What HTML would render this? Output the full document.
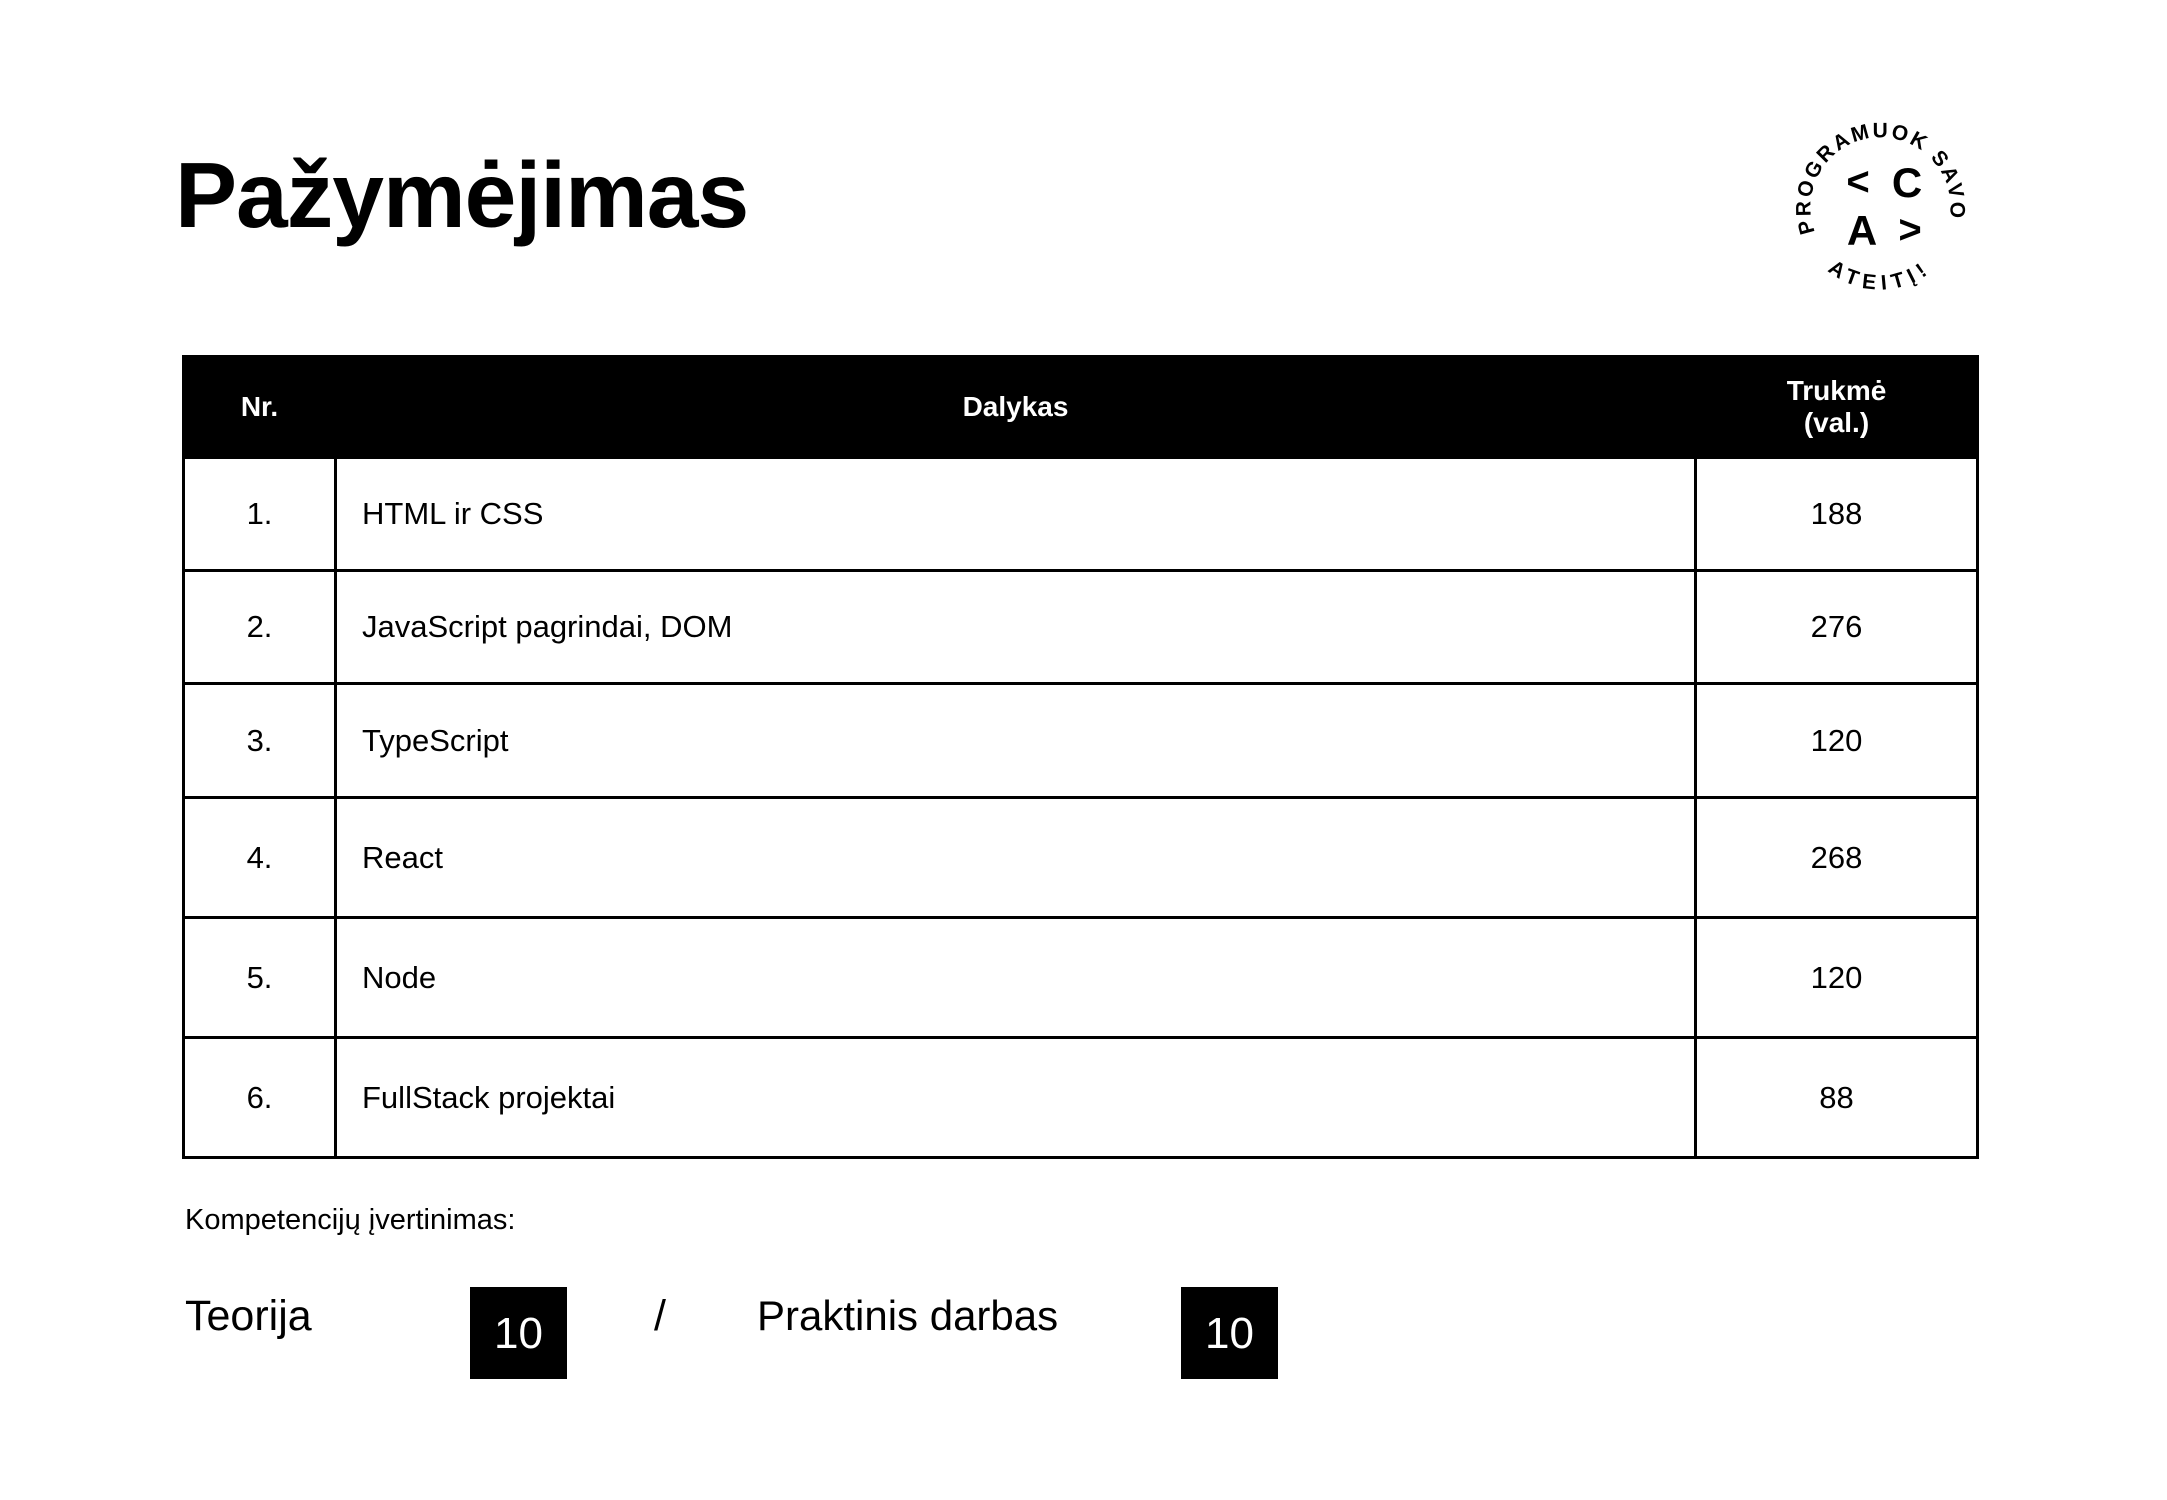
<!DOCTYPE html>
<html><head><meta charset="utf-8"><style>
html,body{margin:0;padding:0;background:#fff;}
body{width:2167px;height:1500px;position:relative;overflow:hidden;font-family:"Liberation Sans",sans-serif;color:#000;}
.a{position:absolute;white-space:nowrap;}
.title{left:175px;top:149px;font-size:93px;font-weight:bold;letter-spacing:-1px;line-height:1;}
table{position:absolute;left:182px;top:355px;width:1797px;border-collapse:collapse;}
td,th{border:3px solid #000;padding:0;}
th{background:#000;color:#fff;font-size:28px;font-weight:bold;height:98px;line-height:32px;}
td{font-size:31px;}
td.c{text-align:center;}
td.l{padding-left:25px;}
.box{position:absolute;background:#000;color:#fff;font-size:44px;text-align:center;line-height:94px;width:97px;height:92px;top:1287px;}
</style></head><body>
<div class="a title">Pažymėjimas</div>

<svg class="a" style="left:0;top:0" width="2167" height="320" viewBox="0 0 2167 320">
<defs>
<path id="p1" d="M 1815 232 A 70 70 0 1 1 1948 226"/>
<path id="p2" d="M 1817 260 A 82 82 0 0 0 1943 260"/>
</defs>
<text font-family="Liberation Sans" font-size="21" font-weight="bold"><textPath href="#p1" textLength="255" lengthAdjust="spacing">PROGRAMUOK SAVO</textPath></text>
<text font-family="Liberation Sans" font-size="21" font-weight="bold" letter-spacing="6"><textPath href="#p2" startOffset="50%" text-anchor="middle">ATEITĮ!</textPath></text>
<text x="1858" y="195" font-family="Liberation Sans" font-size="40" font-weight="bold" text-anchor="middle">&lt;</text>
<text x="1907" y="197" font-family="Liberation Sans" font-size="42" font-weight="bold" text-anchor="middle">C</text>
<text x="1862" y="245" font-family="Liberation Sans" font-size="42" font-weight="bold" text-anchor="middle">A</text>
<text x="1910" y="243" font-family="Liberation Sans" font-size="40" font-weight="bold" text-anchor="middle">&gt;</text>
</svg>

<table>
<colgroup><col style="width:152px"><col style="width:1360px"><col></colgroup>
<tr><th>Nr.</th><th>Dalykas</th><th>Trukmė<br>(val.)</th></tr>
<tr style="height:113px"><td class="c">1.</td><td class="l">HTML ir CSS</td><td class="c">188</td></tr>
<tr style="height:113px"><td class="c">2.</td><td class="l">JavaScript pagrindai, DOM</td><td class="c">276</td></tr>
<tr style="height:114px"><td class="c">3.</td><td class="l">TypeScript</td><td class="c">120</td></tr>
<tr style="height:120px"><td class="c">4.</td><td class="l">React</td><td class="c">268</td></tr>
<tr style="height:120px"><td class="c">5.</td><td class="l">Node</td><td class="c">120</td></tr>
<tr style="height:120px"><td class="c">6.</td><td class="l">FullStack projektai</td><td class="c">88</td></tr>
</table>

<div class="a" style="left:185px;top:1204px;font-size:29px;">Kompetencijų įvertinimas:</div>
<div class="a" style="left:185px;top:1292px;font-size:43px;">Teorija</div>
<div class="box" style="left:470px;">10</div>
<div class="a" style="left:654px;top:1292px;font-size:43px;">/</div>
<div class="a" style="left:757px;top:1292px;font-size:42px;">Praktinis darbas</div>
<div class="box" style="left:1181px;">10</div>
</body></html>
